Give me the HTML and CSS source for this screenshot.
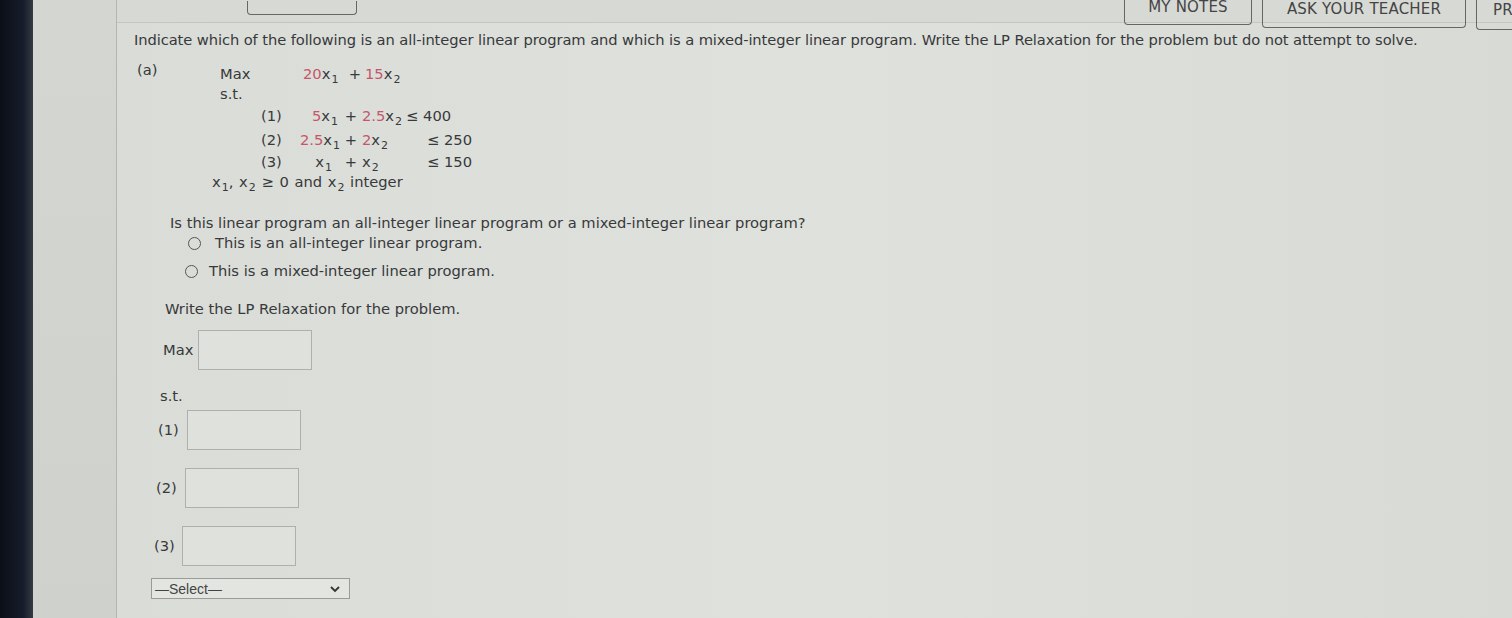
FILE: index.html
```html
<!DOCTYPE html>
<html>
<head>
<meta charset="utf-8">
<link rel="stylesheet" href="styles.css">
</head>
<body>
<div class="screen">
  <div class="bezel"></div>
  <div class="sidebar"></div>
  <div class="main">
    <div class="toolbar">
      <div class="tb-left"><span class="btn btn-blank"></span></div>
      <div class="tb-right">
        <span class="btn btn-notes">MY NOTES</span>
        <span class="btn btn-ask">ASK YOUR TEACHER</span>
        <span class="btn btn-pr">PR</span>
      </div>
    </div>
    <div class="content">
      <p class="intro">Indicate which of the following is an all-integer linear program and which is a mixed-integer linear program. Write the LP Relaxation for the problem but do not attempt to solve.</p>
      <div class="part">
        <span class="part-label">(a)</span>
        <div class="model">
          <div class="obj"><span class="kw">Max</span><span class="t1 left"><span class="red">20</span><i>x</i><sub>1</sub></span><span class="op">+</span><span class="t2"><span class="red">15</span><i>x</i><sub>2</sub></span></div>
          <div class="st">s.t.</div>
          <div class="cons c1"><span class="cn">(1)</span><span class="t1"><span class="red">5</span><i>x</i><sub>1</sub></span><span class="op">+</span><span class="t2 tight"><span class="red">2.5</span><i>x</i><sub>2</sub></span><span class="rhs">≤ 400</span></div>
          <div class="cons c2"><span class="cn">(2)</span><span class="t1"><span class="red">2.5</span><i>x</i><sub>1</sub></span><span class="op">+</span><span class="t2"><span class="red">2</span><i>x</i><sub>2</sub></span><span class="rhs">≤ 250</span></div>
          <div class="cons c3"><span class="cn">(3)</span><span class="t1 short"><i>x</i><sub>1</sub></span><span class="op">+</span><span class="t2"><i>x</i><sub>2</sub></span><span class="rhs">≤ 150</span></div>
          <div class="nonneg"><i>x</i><sub>1</sub>, <i>x</i><sub>2</sub> ≥ 0 and <i>x</i><sub>2</sub> integer</div>
        </div>
      </div>
      <p class="q">Is this linear program an all-integer linear program or a mixed-integer linear program?</p>
      <label class="radio r1"><span class="dot"></span>This is an all-integer linear program.</label>
      <label class="radio r2"><span class="dot"></span>This is a mixed-integer linear program.</label>
      <p class="write">Write the LP Relaxation for the problem.</p>
      <div class="row row-max"><span class="lbl">Max</span><span class="box"></span></div>
      <div class="row-st">s.t.</div>
      <div class="row row-1"><span class="lbl">(1)</span><span class="box"></span></div>
      <div class="row row-2"><span class="lbl">(2)</span><span class="box"></span></div>
      <div class="row row-3"><span class="lbl">(3)</span><span class="box"></span></div>
      <div class="select"><span>—Select—</span><svg width="12" height="8" viewBox="0 0 12 8"><path d="M2 2 L6 6 L10 2" fill="none" stroke="#333" stroke-width="1.8"/></svg></div>
    </div>
  </div>
</div>
</body>
</html>
```
FILE: styles.css
```css
* { box-sizing: border-box; }
html, body { margin: 0; padding: 0; }
body { width: 1512px; height: 618px; overflow: hidden; background: #d9dbd7; font-family: "DejaVu Sans", Verdana, sans-serif; color: #37393a; }
.screen { display: flex; height: 618px; }
.bezel { width: 33px; flex: none; background: linear-gradient(90deg, #0b0f18 0%, #161c2a 70%, #353a44 100%); }
.sidebar { width: 84px; flex: none; background: linear-gradient(180deg, #d4d6d2, #cfd1cd); border-right: 1px solid #b4b6b2; }
.main { flex: 1; display: flex; flex-direction: column; background: linear-gradient(90deg, #dadcd8 0%, #dfe1dd 50%, #d8dad6 100%); }
.toolbar { height: 23px; flex: none; display: flex; justify-content: space-between; border-bottom: 1px solid #c4c6c2; background: #d7d9d5; }
.tb-left { padding-left: 130px; }
.btn { display: inline-flex; align-items: flex-end; justify-content: center; border: 1.5px solid #666; border-top: none; border-radius: 0 0 4px 4px; font-size: 15px; color: #444; letter-spacing: 0.2px; padding-bottom: 5px; }
.btn-blank { width: 110px; height: 14px; }
.tb-right { display: flex; gap: 10px; align-items: flex-start; margin-right: -5px; }
.btn-notes { width: 128px; height: 25px; padding-bottom: 8px; }
.btn-ask { width: 204px; height: 28px; padding-bottom: 9px; }
.btn-pr { width: 41px; height: 30px; border-right: none; justify-content: flex-start; padding-left: 16px; padding-bottom: 10px; border-radius: 0 0 0 4px; }
.content { padding: 0 0 0 17px; font-size: 14.7px; line-height: 18px; }
p { margin: 0; }
.intro { margin-top: 8px; white-space: nowrap; letter-spacing: -0.09px; }
.part { display: flex; margin-top: 12px; }
.part-label { width: 86px; padding-left: 3px; }
.red { color: #c5566a; }
i { font-style: normal; }
sub { font-size: 11px; vertical-align: -4px; line-height: 0; margin-left: 1px; }
.obj { display: flex; padding-top: 4px; }
.kw { width: 83px; }
.t1 { width: 45px; text-align: right; }
.t1.left { width: 42px; text-align: left; }
.op { width: 22px; text-align: center; }
.obj .op { width: 20px; }
.t2 { width: 65px; }
.t2.tight { width: auto; margin-right: 4px; }
.st { margin-top: 2px; }
.cons { display: flex; margin-left: 41px; }
.cn { width: 34px; }
.c1 .t1 { padding-right: 2px; }
.t1.short { padding-right: 8px; }
.c1 { margin-top: 4px; }
.c2 { margin-top: 6px; }
.c3 { margin-top: 4px; }
.nonneg { margin-top: 2px; margin-left: -8px; word-spacing: 1px; }
.q { margin-top: 23px; margin-left: 36px; }
.radio { display: flex; align-items: center; margin-top: 2px; margin-left: 54px; }
.r2 { margin-left: 51px; margin-top: 10px; }
.dot { width: 13px; height: 13px; border: 1.6px solid #555; border-radius: 50%; margin-right: 14px; }
.r2 .dot { margin-right: 11px; }
.write { margin-top: 20px; margin-left: 31px; }
.row { display: flex; align-items: center; }
.lbl { display: block; }
.box { display: block; width: 114px; height: 40px; border: 1.5px solid #aeb0ad; background: #dfe1dd; }
.row-max { margin-top: 12px; margin-left: 29px; }
.row-max .lbl { width: 35px; }
.row-st { margin-top: 17px; margin-left: 26px; }
.row-1 { margin-top: 5px; margin-left: 24px; }
.row-1 .lbl { width: 29px; }
.row-2 { margin-top: 18px; margin-left: 22px; }
.row-2 .lbl { width: 29px; }
.row-3 { margin-top: 18px; margin-left: 20px; }
.row-3 .lbl { width: 28px; }
.select { margin-top: 12px; margin-left: 17px; width: 199px; height: 21px; border: 1.5px solid #9a9c99; background: #e3e5e1; display: flex; align-items: center; justify-content: space-between; padding: 0 8px 0 3px; font-family: "Liberation Sans", Arial, sans-serif; font-size: 14px; color: #444; line-height: 1; }
```
